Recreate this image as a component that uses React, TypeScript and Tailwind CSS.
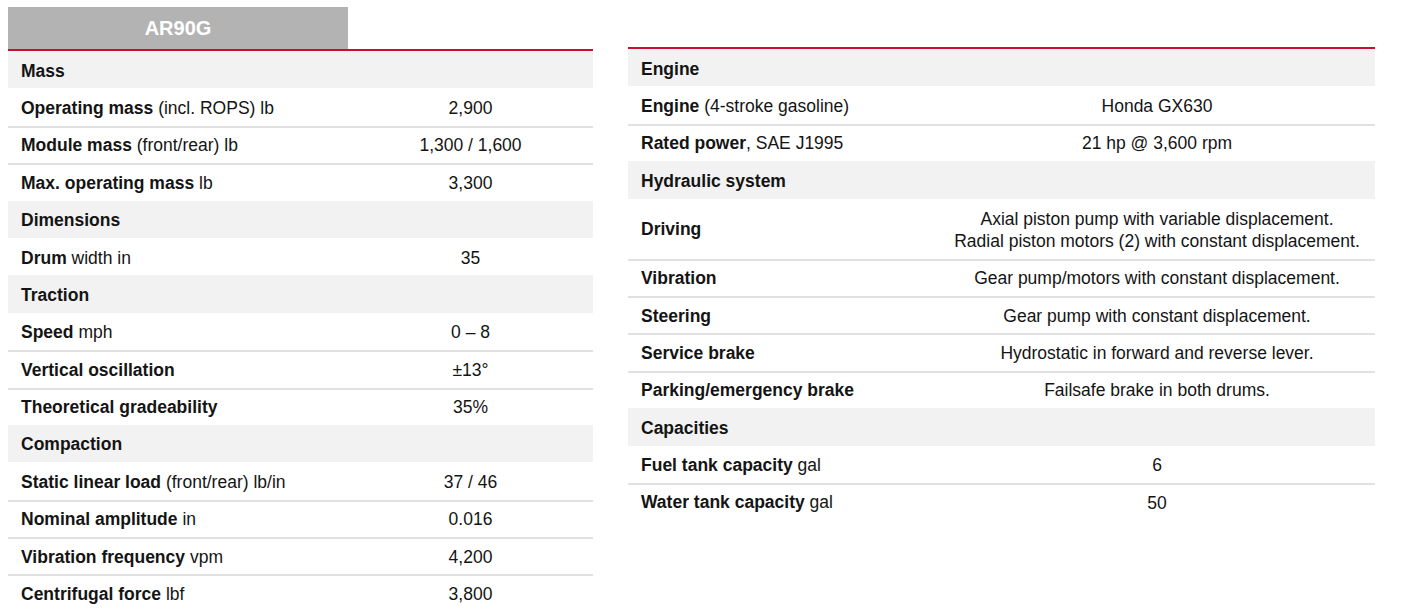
import React from "react";

type Row =
  | { kind: "head"; title: string }
  | { kind: "data"; bold: string; rest?: string; value: React.ReactNode; tall?: boolean };

const leftRows: Row[] = [
  { kind: "head", title: "Mass" },
  { kind: "data", bold: "Operating mass", rest: " (incl. ROPS) lb", value: "2,900" },
  { kind: "data", bold: "Module mass", rest: " (front/rear) lb", value: "1,300 / 1,600" },
  { kind: "data", bold: "Max. operating mass", rest: " lb", value: "3,300" },
  { kind: "head", title: "Dimensions" },
  { kind: "data", bold: "Drum", rest: " width in", value: "35" },
  { kind: "head", title: "Traction" },
  { kind: "data", bold: "Speed", rest: " mph", value: "0 – 8" },
  { kind: "data", bold: "Vertical oscillation", value: "±13°" },
  { kind: "data", bold: "Theoretical gradeability", value: "35%" },
  { kind: "head", title: "Compaction" },
  { kind: "data", bold: "Static linear load", rest: " (front/rear) lb/in", value: "37 / 46" },
  { kind: "data", bold: "Nominal amplitude", rest: " in", value: "0.016" },
  { kind: "data", bold: "Vibration frequency", rest: " vpm", value: "4,200" },
  { kind: "data", bold: "Centrifugal force", rest: " lbf", value: "3,800" },
];

const rightRows: Row[] = [
  { kind: "head", title: "Engine" },
  { kind: "data", bold: "Engine", rest: " (4-stroke gasoline)", value: "Honda GX630" },
  { kind: "data", bold: "Rated power", rest: ", SAE J1995", value: "21 hp @ 3,600 rpm" },
  { kind: "head", title: "Hydraulic system" },
  {
    kind: "data",
    bold: "Driving",
    tall: true,
    value: (
      <>
        Axial piston pump with variable displacement.
        <br />
        Radial piston motors (2) with constant displacement.
      </>
    ),
  },
  { kind: "data", bold: "Vibration", value: "Gear pump/motors with constant displacement." },
  { kind: "data", bold: "Steering", value: "Gear pump with constant displacement." },
  { kind: "data", bold: "Service brake", value: "Hydrostatic in forward and reverse lever." },
  { kind: "data", bold: "Parking/emergency brake", value: "Failsafe brake in both drums." },
  { kind: "head", title: "Capacities" },
  { kind: "data", bold: "Fuel tank capacity", rest: " gal", value: "6" },
  { kind: "data", bold: "Water tank capacity", rest: " gal", value: "50" },
];

function SpecTable({ rows, labelWidth }: { rows: Row[]; labelWidth: string }) {
  return (
    <div className="flex flex-col">
      {rows.map((row, i) => {
        if (row.kind === "head") {
          return (
            <div
              key={i}
              className="h-[37.4px] flex items-center bg-[#f2f2f2] px-[13px] pt-[2px] font-bold"
            >
              {row.title}
            </div>
          );
        }
        const prevIsData = i > 0 && rows[i - 1].kind === "data";
        return (
          <div
            key={i}
            className={`flex items-center border-t-2 ${row.tall ? "h-[60px]" : "h-[37.4px]"} ${
              prevIsData ? "border-[#e1e1e1]" : "border-transparent"
            }`}
          >
            <div className={`${labelWidth} shrink-0 pl-[13px]`}>
              <span className="font-bold">{row.bold}</span>
              {row.rest}
            </div>
            <div className="flex-1 text-center leading-[22px]">{row.value}</div>
          </div>
        );
      })}
    </div>
  );
}

export default function App() {
  return (
    <div className="w-[1405px] h-[611px] overflow-hidden bg-white text-[#141414] text-[17.5px] font-['Liberation_Sans',Arial,sans-serif]">
      <div className="flex gap-[35px] pl-[8px]">
        <div className="w-[585px] pt-[7px]">
          <div className="w-[340px] h-[42px] bg-[#b3b3b3] flex items-center justify-center text-white font-bold text-[20px]">
            AR90G
          </div>
          <div className="border-t-2 border-[#c8102e]">
            <SpecTable rows={leftRows} labelWidth="w-[340px]" />
          </div>
        </div>
        <div className="w-[747px] pt-[47px]">
          <div className="border-t-2 border-[#c8102e]">
            <SpecTable rows={rightRows} labelWidth="w-[311px]" />
          </div>
        </div>
      </div>
    </div>
  );
}
